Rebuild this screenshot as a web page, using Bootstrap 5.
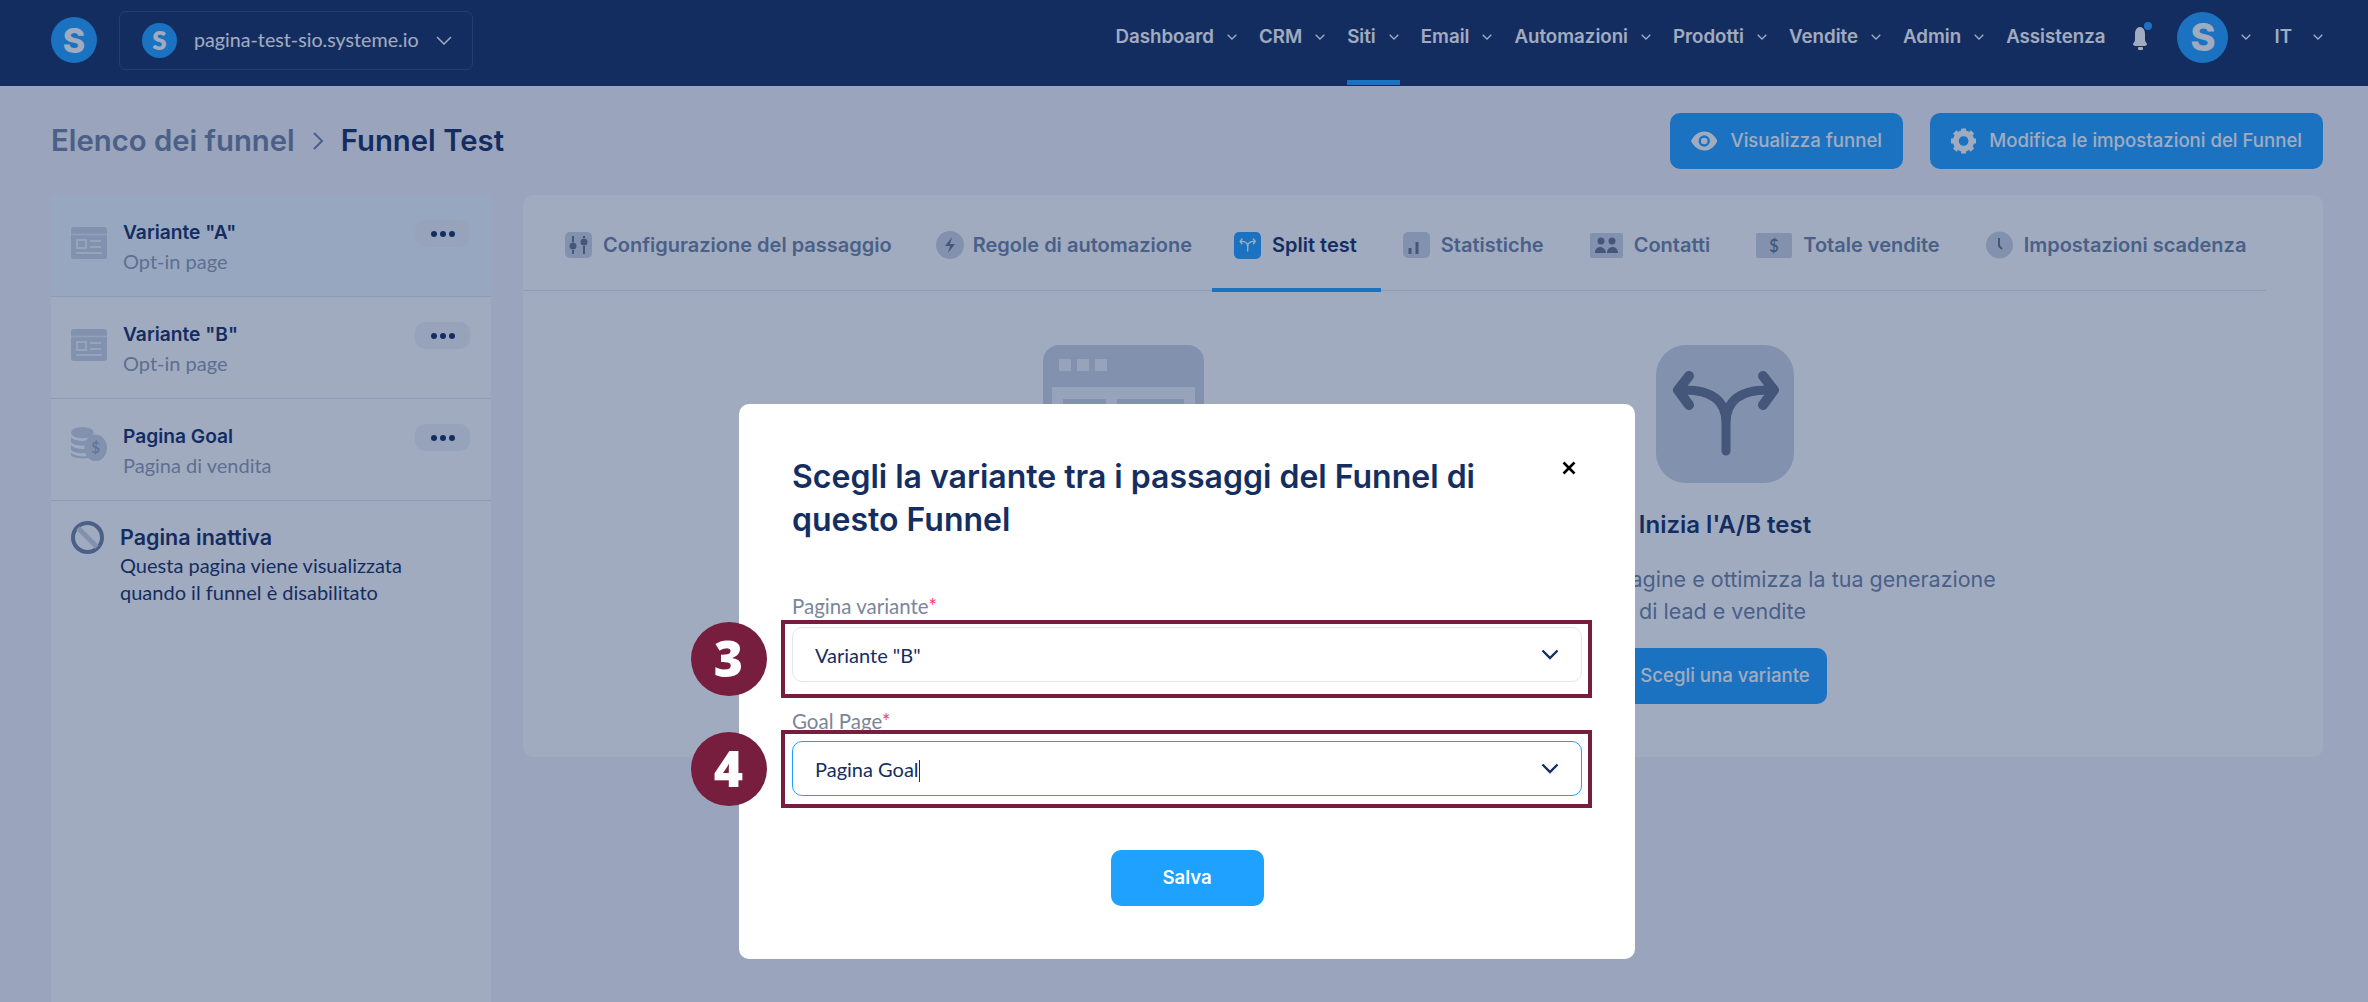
<!DOCTYPE html>
<html lang="it">
<head>
  <meta charset="UTF-8" />
  <title>Funnel Test</title>
  <link href="https://cdn.jsdelivr.net/npm/bootstrap@5.3.2/dist/css/bootstrap.min.css" rel="stylesheet" />
  <style>
    body { background: #f3f4fa; color: #142e62; font-family: "Inter", sans-serif; height: 1002px; overflow: hidden; }
    .topbar { height: 86px; background: #142e62; padding: 0 45px 6px 51px; color: #fff; }
    .logo-s { border-radius: 50%; background: #1ea1ff; color: #fff; font-weight: 800; display: flex; align-items: center; justify-content: center; flex: none; }
    .logo-big { width: 46px; height: 46px; font-size: 34px; }
    .logo-mid { width: 35px; height: 35px; font-size: 26px; }
    .logo-av { width: 51px; height: 51px; font-size: 38px; }
    .site-pick { width: 354px; height: 59px; margin-left: 22px; padding: 0 21px 0 22px; border: 1px solid #2e4a80; border-radius: 7px; font-family: "Lato", sans-serif; font-size: 19.7px; gap: 17px; white-space: nowrap; }
    .top-links { gap: 22px; font-size: 18.7px; font-weight: 600; margin-top: -6px; }
    .top-item { gap: 13px; position: relative; }
    .top-item.on::after { content: ""; position: absolute; left: 0; top: 57px; height: 5px; background: #1ea1ff; width: 53px; }
    .page-head { height: 109px; padding: 0 45px 0 51px; }
    .crumb { font-size: 29.3px; font-weight: 600; gap: 17px; }
    .crumb-dim { color: #6e82a1; }
    .btn-blue { background: #1ea1ff; color: #fff; border: 0; border-radius: 10px; height: 56px; font-size: 18.6px; font-weight: 500; font-family: "Inter", sans-serif; }
    .btn-blue:hover { background: #1ea1ff; color: #fff; }
    .head-btns { gap: 27px; }
    .head-btn { gap: 13px; padding: 0 21px; white-space: nowrap; }
    .side-col { width: 440px; margin-left: 51px; background: #fff; height: 807px; flex: none; }
    .side-item { height: 102px; padding: 32px 21px 0 20px; border-bottom: 1.5px solid #dfe4eb; }
    .side-item.on { background: #f1f9ff; }
    .side-ico { width: 36px; margin-right: 16px; flex: none; }
    .side-name { font-size: 19.2px; font-weight: 600; line-height: 24px; margin-top: -7px; }
    .side-sub { font-family: "Lato", sans-serif; font-size: 20px; color: #8f9bb0; line-height: 24px; margin-top: 5px; }
    .dots-btn { width: 55px; height: 27px; border-radius: 10px; background: #eef2f7; margin-top: -7px; gap: 3px; flex: none; }
    .dots-btn i { width: 6px; height: 6px; border-radius: 50%; background: #142e62; }
    .off-box { padding: 20px 20px; }
    .off-title { font-size: 21.5px; font-weight: 600; line-height: 27px; margin-top: 3px; }
    .off-text { font-family: "Lato", sans-serif; font-size: 20px; line-height: 27px; margin-top: 1px; }
    .main-card { width: 1800px; height: 562px; margin-left: 32px; background: #fff; border-radius: 10px; }
    .tab-strip { height: 96px; margin-right: 57px; padding-left: 20px; border-bottom: 1.5px solid #dfe4eb; }
    .tab-one { height: 96px; flex: none; white-space: nowrap; padding: 4px 22px 0 22px; gap: 11px; font-size: 20px; font-weight: 600; color: #6e82a1; position: relative; }
    .tab-one.on { color: #142e62; }
    .tab-one.on::after { content: ""; position: absolute; left: 0; right: 0; bottom: -1px; height: 4px; background: #1ea1ff; }
    .tab-one:nth-child(2) { gap: 9px; padding-right: 20px; }
    .tab-one:nth-child(n+3) { padding-right: 24px; }
    .tab-one:last-child { padding-right: 0; }
    .empty-wrap { padding-top: 54px; padding-left: 4px; }
    .empty-col { width: 600px; }
    .browser-pic { margin-left: -4px; }
    .big-tile { width: 138px; height: 138px; border-radius: 30px; background: #cbd5e1; }
    .empty-title { font-size: 24px; font-weight: 600; margin: 26px 0 0; line-height: 32px; }
    .empty-text { font-size: 21.5px; color: #6e82a1; line-height: 32px; margin: 22px 0 0 -5px; }
    .empty-btn { margin-top: 21px; width: 204px; }
    .dim-layer { background: rgba(20, 46, 98, .4); padding: 404px 0 0 6px; z-index: 10; }
    .dialog { width: 896px; height: 555px; background: #fff; border-radius: 10px; padding: 51px 53px; position: relative; }
    .dialog-title { font-size: 32px; font-weight: 600; line-height: 43px; margin: 0; width: 700px; }
    .close-x { position: absolute; left: 823px; top: 57px; }
    .field-label { font-family: "Lato", sans-serif; font-size: 20.5px; color: #7a8699; line-height: 24px; display: block; }
    .field-label b { color: #ff3b6b; font-weight: 400; }
    .pick-box { height: 55px; border: 1.5px solid #e3e6ea; border-radius: 10px; padding: 0 22px 0 22px; font-family: "Lato", sans-serif; font-size: 20px; position: relative; }
    .pick-box.act { border-color: #1ea1ff; }
    .caret-bar { display: inline-block; width: 1.5px; height: 22px; background: #142e62; vertical-align: -5px; }
    .mark-box { position: absolute; left: -12.5px; right: -10.5px; border: 4px solid #771d3d; }
    .mark-num { position: absolute; left: -102.5px; width: 76px; height: 74px; border-radius: 50%; background: #771d3d; color: #fff; font-family: "Open Sans", sans-serif; font-weight: 800; font-size: 50px; }
    .dialog-save { width: 153px; margin-top: 54px; font-weight: 600; }
  </style>
</head>
<body>
  <svg width="0" height="0" class="position-absolute">
    <symbol id="ico-page" viewBox="0 0 36 32">
      <path d="M3 0h30a3 3 0 0 1 3 3v26a3 3 0 0 1-3 3H3a3 3 0 0 1-3-3V3a3 3 0 0 1 3-3z" fill="#cbd5e1"/>
      <path d="M0 7.500h36" stroke="#e6ebf2" stroke-width="1.500"/>
      <path d="M6 13h9v8H6zM19 14h11M19 20h11M5 26h26" fill="none" stroke="#eef2f7" stroke-width="2"/>
    </symbol>
    <symbol id="ico-fork" viewBox="0 0 138 138">
      <path d="M70 106V78C70 55 55 45 28 45M70 78c0-23 15-33 42-33" fill="none" stroke="currentColor" stroke-width="9" stroke-linecap="round"/>
      <path d="M33 31 22 45l11 15M107 31l11 14-11 15" fill="none" stroke="currentColor" stroke-width="10" stroke-linecap="round" stroke-linejoin="round"/>
    </symbol>
  </svg>

  <nav class="topbar d-flex align-items-center">
    <span class="logo-s logo-big">S</span>
    <div class="site-pick d-flex align-items-center">
      <span class="logo-s logo-mid">S</span>
      <span class="flex-grow-1">pagina-test-sio.systeme.io</span>
      <svg width="16" height="9" viewBox="0 0 16 9" class="flex-shrink-0"><path d="M1 1l7 7 7-7" fill="none" stroke="#fff" stroke-width="1.500"/></svg>
    </div>
    <div class="top-links d-flex align-items-center ms-auto" id="topLinks"></div>
  </nav>

  <header class="page-head d-flex align-items-center justify-content-between">
    <div class="crumb d-flex align-items-center">
      <span class="crumb-dim">Elenco dei funnel</span>
      <svg width="12" height="20" viewBox="0 0 12 20"><path d="M2 2l8 8-8 8" fill="none" stroke="#6e82a1" stroke-width="2"/></svg>
      <span>Funnel Test</span>
    </div>
    <div class="head-btns d-flex">
      <button class="btn btn-blue head-btn d-flex align-items-center" style="width:233px">
        <svg width="28" height="20" viewBox="0 0 28 20"><path d="M14 0C8 0 3 4 0 10c3 6 8 10 14 10s11-4 14-10C25 4 20 0 14 0z" fill="#fff"/><circle cx="14" cy="10" r="6" fill="#1ea1ff"/><circle cx="14" cy="10" r="3.500" fill="#fff"/></svg>
        <span>Visualizza funnel</span>
      </button>
      <button class="btn btn-blue head-btn d-flex align-items-center" style="width:393px">
        <svg width="26" height="26" viewBox="0 0 26 26"><circle cx="13" cy="13" r="8" fill="none" stroke="#fff" stroke-width="6"/><path d="M13 0v6M13 20v6M0 13h6M20 13h6M3.800 3.800l4.200 4.200M18 18l4.200 4.200M3.800 22.200 8 18M18 8l4.200-4.200" stroke="#fff" stroke-width="5"/></svg>
        <span>Modifica le impostazioni del Funnel</span>
      </button>
    </div>
  </header>

  <div class="d-flex align-items-start">
    <aside class="side-col">
      <div class="side-item on d-flex">
        <svg class="side-ico" height="32"><use href="#ico-page"/></svg>
        <div class="flex-grow-1"><div class="side-name">Variante "A"</div><div class="side-sub">Opt-in page</div></div>
        <div class="dots-btn d-flex align-items-center justify-content-center"><i></i><i></i><i></i></div>
      </div>
      <div class="side-item d-flex">
        <svg class="side-ico" height="32"><use href="#ico-page"/></svg>
        <div class="flex-grow-1"><div class="side-name">Variante "B"</div><div class="side-sub">Opt-in page</div></div>
        <div class="dots-btn d-flex align-items-center justify-content-center"><i></i><i></i><i></i></div>
      </div>
      <div class="side-item d-flex">
        <svg class="side-ico" height="36" viewBox="0 0 38 36" style="margin-top:-5px">
          <ellipse cx="12" cy="6" rx="12" ry="6" fill="#cbd5e1"/>
          <path d="M0 11c3 5 21 5 24 0v5C21 21 3 21 0 16zM0 19c3 5 18 5 20 3v4c-4 3-17 2-20-2zM0 27c3 4 15 5 20 3v2c-4 2-17 2-20-2z" fill="#cbd5e1"/>
          <ellipse cx="26" cy="22" rx="12" ry="14" fill="#cbd5e1"/>
          <text x="26" y="28" font-size="16" text-anchor="middle" fill="#8f9bb0" font-family="Lato">$</text>
        </svg>
        <div class="flex-grow-1"><div class="side-name">Pagina Goal</div><div class="side-sub">Pagina di vendita</div></div>
        <div class="dots-btn d-flex align-items-center justify-content-center"><i></i><i></i><i></i></div>
      </div>
      <div class="off-box d-flex gap-3">
        <svg width="33" height="33" viewBox="0 0 33 33" class="flex-shrink-0"><circle cx="16.500" cy="16.500" r="14.500" fill="none" stroke="#6e82a1" stroke-width="4"/><path d="M7 7l19 19" stroke="#cbd5e1" stroke-width="5"/></svg>
        <div>
          <div class="off-title">Pagina inattiva</div>
          <div class="off-text">Questa pagina viene visualizzata<br>quando il funnel è disabilitato</div>
        </div>
      </div>
    </aside>

    <main class="main-card">
      <div class="tab-strip d-flex">
        <div class="tab-one d-flex align-items-center">
          <svg width="27" height="26" viewBox="0 0 27 26"><rect width="27" height="26" rx="5" fill="#cbd5e1"/><path d="M8 4v6M8 18v4M19 4v2M19 14v8" stroke="#64748b" stroke-width="2"/><circle cx="8" cy="14" r="3.500" fill="#64748b"/><circle cx="19" cy="10" r="3.500" fill="#64748b"/></svg>
          <span>Configurazione del passaggio</span>
        </div>
        <div class="tab-one d-flex align-items-center">
          <svg width="28" height="28" viewBox="0 0 28 28"><circle cx="14" cy="14" r="14" fill="#cbd5e1"/><path d="M16 6 9 15h5l-2 7 7-9h-5z" fill="#64748b"/></svg>
          <span>Regole di automazione</span>
        </div>
        <div class="tab-one on d-flex align-items-center">
          <svg width="27" height="27" viewBox="0 0 138 138" style="color:#fff"><rect width="138" height="138" rx="26" fill="#1ea1ff"/><use href="#ico-fork" width="138" height="138" transform="translate(14 12) scale(.8)"/></svg>
          <span>Split test</span>
        </div>
        <div class="tab-one d-flex align-items-center">
          <svg width="27" height="26" viewBox="0 0 27 26"><rect width="27" height="26" rx="5" fill="#cbd5e1"/><path d="M7 22v-6M14 22V10" stroke="#64748b" stroke-width="3"/></svg>
          <span>Statistiche</span>
        </div>
        <div class="tab-one d-flex align-items-center">
          <svg width="33" height="25" viewBox="0 0 33 25"><rect width="33" height="25" rx="2" fill="#cbd5e1"/><circle cx="11" cy="8" r="3.500" fill="#64748b"/><circle cx="22" cy="8" r="3.500" fill="#64748b"/><path d="M5 20c0-8 10-8 11 0zM17 20c0-8 11-8 11 0z" fill="#64748b"/></svg>
          <span>Contatti</span>
        </div>
        <div class="tab-one d-flex align-items-center">
          <svg width="36" height="25" viewBox="0 0 36 25"><rect width="36" height="25" rx="2" fill="#cbd5e1"/><text x="18" y="19" font-size="17" text-anchor="middle" fill="#64748b" font-family="Lato">$</text></svg>
          <span>Totale vendite</span>
        </div>
        <div class="tab-one d-flex align-items-center">
          <svg width="27" height="28" viewBox="0 0 27 28"><circle cx="13.500" cy="14" r="13.500" fill="#cbd5e1"/><path d="M13 7v8l3 3" fill="none" stroke="#64748b" stroke-width="2"/></svg>
          <span>Impostazioni scadenza</span>
        </div>
      </div>
      <div class="empty-wrap d-flex justify-content-center">
        <div class="empty-col d-flex flex-column align-items-center">
          <svg class="browser-pic" width="161" height="138" viewBox="0 0 161 138"><rect width="161" height="138" rx="16" fill="#cbd5e1"/><path d="M16 14h12v12H16zM34 14h12v12H34zM52 14h12v12H52z" fill="#eef2f7"/><rect x="9" y="42" width="143" height="86" fill="#eef2f7"/><rect x="20" y="54" width="43" height="60" fill="#cbd5e1"/><rect x="74" y="54" width="67" height="11" fill="#cbd5e1"/></svg>
        </div>
        <div class="empty-col d-flex flex-column align-items-center text-center">
          <div class="big-tile">
            <svg width="138" height="138" class="d-block" style="color:#64748b"><use href="#ico-fork"/></svg>
          </div>
          <h2 class="empty-title">Inizia l'A/B test</h2>
          <p class="empty-text text-nowrap">Testa le tue due pagine e ottimizza la tua generazione<br>di lead e vendite</p>
          <button class="btn btn-blue empty-btn">Scegli una variante</button>
        </div>
      </div>
    </main>
  </div>

  <div class="dim-layer position-fixed top-0 start-0 w-100 h-100 d-flex justify-content-center align-items-start">
    <form class="dialog">
      <h1 class="dialog-title">Scegli la variante tra i passaggi del Funnel di questo Funnel</h1>
      <svg class="close-x" width="14" height="14" viewBox="0 0 14 14"><path d="M1.500 1.500l11 11M12.500 1.500l-11 11" stroke="#000" stroke-width="2.600"/></svg>

      <label class="field-label" style="margin-top:53px;margin-bottom:9px">Pagina variante<b>*</b></label>
      <div class="pick-box d-flex align-items-center justify-content-between">
        <span>Variante "B"</span>
        <svg width="18" height="11" viewBox="0 0 18 11"><path d="M1.500 1.500 9 9l7.500-7.500" fill="none" stroke="#142e62" stroke-width="2.400"/></svg>
        <span class="mark-box" style="top:-8.500px;bottom:-16.500px"></span>
        <span class="mark-num d-flex align-items-center justify-content-center" style="top:-6.500px">3</span>
      </div>

      <label class="field-label" style="margin-top:27px;margin-bottom:8px">Goal Page<b>*</b></label>
      <div class="pick-box act d-flex align-items-center justify-content-between">
        <span>Pagina Goal<span class="caret-bar"></span></span>
        <svg width="18" height="11" viewBox="0 0 18 11"><path d="M1.500 1.500 9 9l7.500-7.500" fill="none" stroke="#142e62" stroke-width="2.400"/></svg>
        <span class="mark-box" style="top:-12.500px;bottom:-12.500px"></span>
        <span class="mark-num d-flex align-items-center justify-content-center" style="top:-10.500px">4</span>
      </div>

      <div class="text-center">
        <button type="button" class="btn btn-blue dialog-save">Salva</button>
      </div>
    </form>
  </div>

  <script>
    // voci del menu in alto
    const items = [["Dashboard",1],["CRM",1],["Siti",1,1],["Email",1],["Automazioni",1],["Prodotti",1],["Vendite",1],["Admin",1],["Assistenza",0]];
    const chev = (extra) => `<svg width="10" height="6" viewBox="0 0 10 6" ${extra || ""}><path d="M.7.7 5 5 9.300.7" fill="none" stroke="#fff" stroke-width="1.300"/></svg>`;
    let html = "";
    items.forEach((it) => {
      html += `<div class="top-item d-flex align-items-center ${it[2] ? "on" : ""}"><span>${it[0]}</span>${it[1] ? chev() : ""}</div>`;
    });
    html += `<svg width="22" height="30" viewBox="0 0 22 30" style="margin-left:3px"><path d="M8 24c-2 0-5 0-5-2 0-1 2-2 2-4v-6c0-4 2-7 5-7s5 3 5 7v6c0 2 2 3 2 4 0 2-3 2-5 2z" fill="#fff"/><rect x="8" y="25" width="5" height="3" rx="1" fill="#fff"/><circle cx="18" cy="4" r="4" fill="#1ea1ff"/></svg>`;
    html += `<span class="logo-s logo-av" style="margin-left:3px">S</span>${chev('style="margin-left:-9px"')}<span style="margin-left:1px">IT</span>${chev('style="margin-left:-1px"')}`;
    document.getElementById("topLinks").innerHTML = html;
  </script>
  <script src="https://cdn.jsdelivr.net/npm/bootstrap@5.3.2/dist/js/bootstrap.bundle.min.js"></script>
</body>
</html>
